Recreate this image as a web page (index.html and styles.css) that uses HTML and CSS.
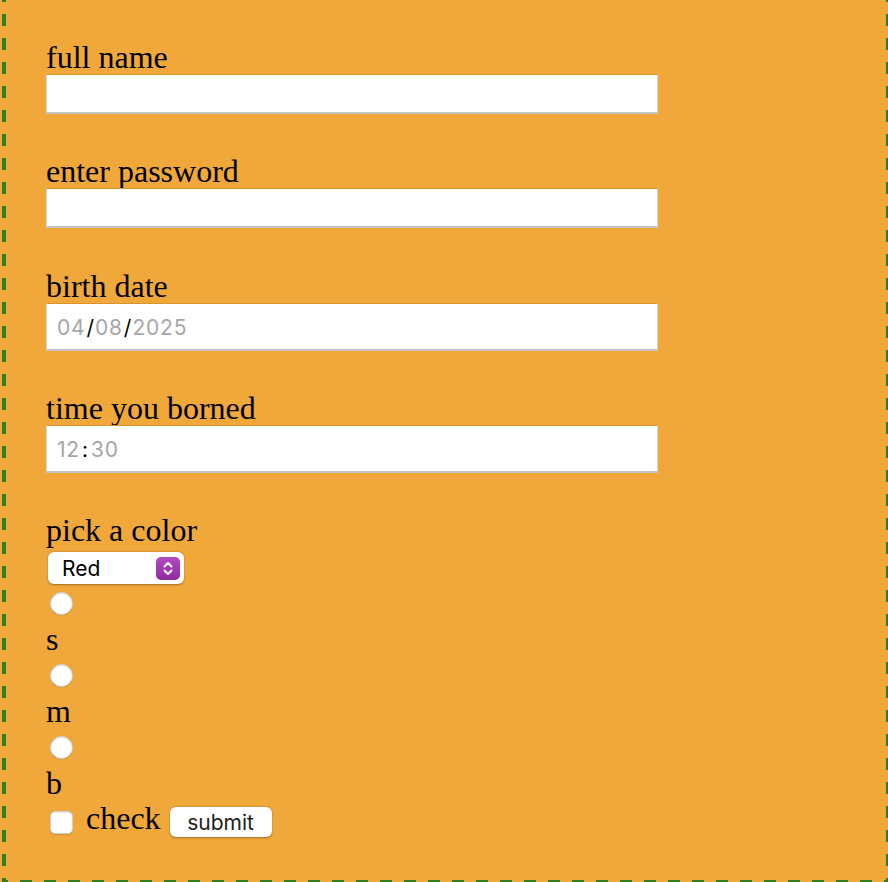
FILE: index.html
```html
<!DOCTYPE html>
<html lang="en">
<head>
<meta charset="utf-8">
<title>Form</title>
<link rel="stylesheet" href="styles.css">
</head>
<body>
<form class="form">
  <label class="lbl lbl-first" for="fullname">full name</label>
  <input class="txt" id="fullname" type="text">

  <label class="lbl" for="pw">enter password</label>
  <input class="txt" id="pw" type="password">

  <label class="lbl lbl-wide">birth date</label>
  <div class="txt seg-field"><span class="seg">04</span><span class="sep">/</span><span class="seg">08</span><span class="sep">/</span><span class="seg">2025</span></div>

  <label class="lbl">time you borned</label>
  <div class="txt seg-field"><span class="seg">12</span><span class="sep colon">:</span><span class="seg">30</span></div>

  <label class="lbl" for="color">pick a color</label>
  <div class="select-wrap">
    <select id="color" class="sel">
      <option>Red</option>
      <option>Green</option>
      <option>Blue</option>
    </select>
    <span class="chev">
      <svg width="24" height="23" viewBox="0 0 24 23">
        <defs>
          <linearGradient id="pg" x1="0" y1="0" x2="0" y2="1">
            <stop offset="0" stop-color="#b24bc4"/>
            <stop offset="1" stop-color="#8d2a9f"/>
          </linearGradient>
        </defs>
        <rect x="0" y="0" width="24" height="23" rx="5" fill="url(#pg)"/>
        <path d="M8.5 9.5 L12 6 L15.5 9.5" fill="none" stroke="#fff" stroke-width="2" stroke-linecap="round" stroke-linejoin="round"/>
        <path d="M8.5 13.5 L12 17 L15.5 13.5" fill="none" stroke="#fff" stroke-width="2" stroke-linecap="round" stroke-linejoin="round"/>
      </svg>
    </span>
  </div>

  <input class="radio" type="radio" name="size" id="s">
  <label class="lbl lbl-opt" for="s">s</label>
  <input class="radio radio-next" type="radio" name="size" id="m">
  <label class="lbl lbl-opt" for="m">m</label>
  <input class="radio radio-next" type="radio" name="size" id="b">
  <label class="lbl lbl-opt" for="b">b</label>

  <div class="row">
    <input class="check" type="checkbox" id="chk">
    <label class="lbl-check" for="chk">check</label>
    <button class="btn" type="submit">submit</button>
  </div>
</form>
</body>
</html>
```

FILE: styles.css
```css
html, body {
  margin: 0;
  padding: 0;
}

body {
  background: #f0a83a;
  overflow: hidden;
  height: 882px;
}

.form {
  display: flex;
  flex-direction: column;
  align-items: flex-start;
  margin-left: 2px;
  width: 888px;
  box-sizing: border-box;
  padding: 0 44px 47px 44px;
  background-color: #f0a83a;
  background-image:
    linear-gradient(to bottom, #347d20 50%, transparent 50%),
    linear-gradient(to bottom, #347d20 50%, transparent 50%),
    linear-gradient(to right, #347d20 50%, transparent 50%);
  background-size: 4px 24px, 4px 24px, 24px 4px;
  background-position: left 0 top 14px, right 0 top 14px, left 18px bottom 0;
  background-repeat: repeat-y, repeat-y, repeat-x;
}

.lbl {
  font-family: "Liberation Serif", "Times New Roman", serif;
  font-size: 32px;
  line-height: 32px;
  color: #000;
  margin-top: 41px;
}

.lbl-wide {
  margin-top: 42px;
}

.txt {
  margin: 1px 0 0 0;
  width: 612px;
  height: 40px;
  box-sizing: border-box;
  background: #fff;
  border: 1px solid #d9d9d9;
  border-top-color: #d8952f;
  border-bottom: 2px solid #c3c3c3;
  border-radius: 0;
  outline: none;
  padding: 0 10px;
  font-family: Inter, "Liberation Sans", sans-serif;
  font-size: 20px;
}

.seg-field {
  height: 48px;
  display: flex;
  align-items: center;
  padding-left: 10px;
  padding-top: 1px;
}

.seg {
  color: #a6a6a6;
  font-family: Inter, "Liberation Sans", sans-serif;
  font-size: 21px;
  letter-spacing: 0.8px;
}

.sep {
  color: #000;
  font-family: Inter, "Liberation Sans", sans-serif;
  font-size: 21px;
  padding: 0 1px;
}

.colon {
  padding: 0 3px 0 2px;
}

.select-wrap {
  position: relative;
  margin-top: 6px;
  margin-left: 2px;
}

.sel {
  appearance: none;
  -webkit-appearance: none;
  display: block;
  width: 136px;
  height: 32px;
  margin: 0;
  border: none;
  border-radius: 6px;
  background: #fff;
  box-shadow: 0 0.5px 2px rgba(0, 0, 0, 0.35);
  padding: 0 0 0 14px;
  font-family: Inter, "Liberation Sans", sans-serif;
  font-size: 21px;
  color: #000;
  outline: none;
}

.chev {
  position: absolute;
  right: 4px;
  top: 5px;
  width: 24px;
  height: 23px;
  pointer-events: none;
}

.chev svg {
  display: block;
}

.radio {
  appearance: none;
  -webkit-appearance: none;
  width: 23px;
  height: 23px;
  margin: 8px 0 0 4px;
  border-radius: 50%;
  background: #fff;
  border: 1px solid #cfcfcf;
  box-sizing: border-box;
  box-shadow: inset 0 1px 1px rgba(0, 0, 0, 0.1), 0 0.5px 1px rgba(0, 0, 0, 0.15);
}

.radio-next {
  margin-top: 9px;
}

.lbl-opt {
  margin-top: 8px;
}

.row {
  display: flex;
  align-items: flex-start;
  margin-top: 3px;
}

.check {
  appearance: none;
  -webkit-appearance: none;
  width: 23px;
  height: 23px;
  margin: 9px 0 0 4px;
  border-radius: 5px;
  background: #fff;
  border: 1px solid #cfcfcf;
  box-sizing: border-box;
  box-shadow: inset 0 1px 1px rgba(0, 0, 0, 0.1), 0 0.5px 1px rgba(0, 0, 0, 0.15);
}

.lbl-check {
  font-family: "Liberation Serif", "Times New Roman", serif;
  font-size: 32px;
  line-height: 32px;
  margin-left: 13px;
  color: #000;
}

.btn {
  margin: 5px 0 0 9px;
  height: 30px;
  width: 102px;
  border: none;
  border-radius: 6px;
  background: #fff;
  box-shadow: 0 0.5px 2px rgba(0, 0, 0, 0.35);
  font-family: Inter, "Liberation Sans", sans-serif;
  font-size: 21px;
  color: #222;
  padding: 0;
}
```
